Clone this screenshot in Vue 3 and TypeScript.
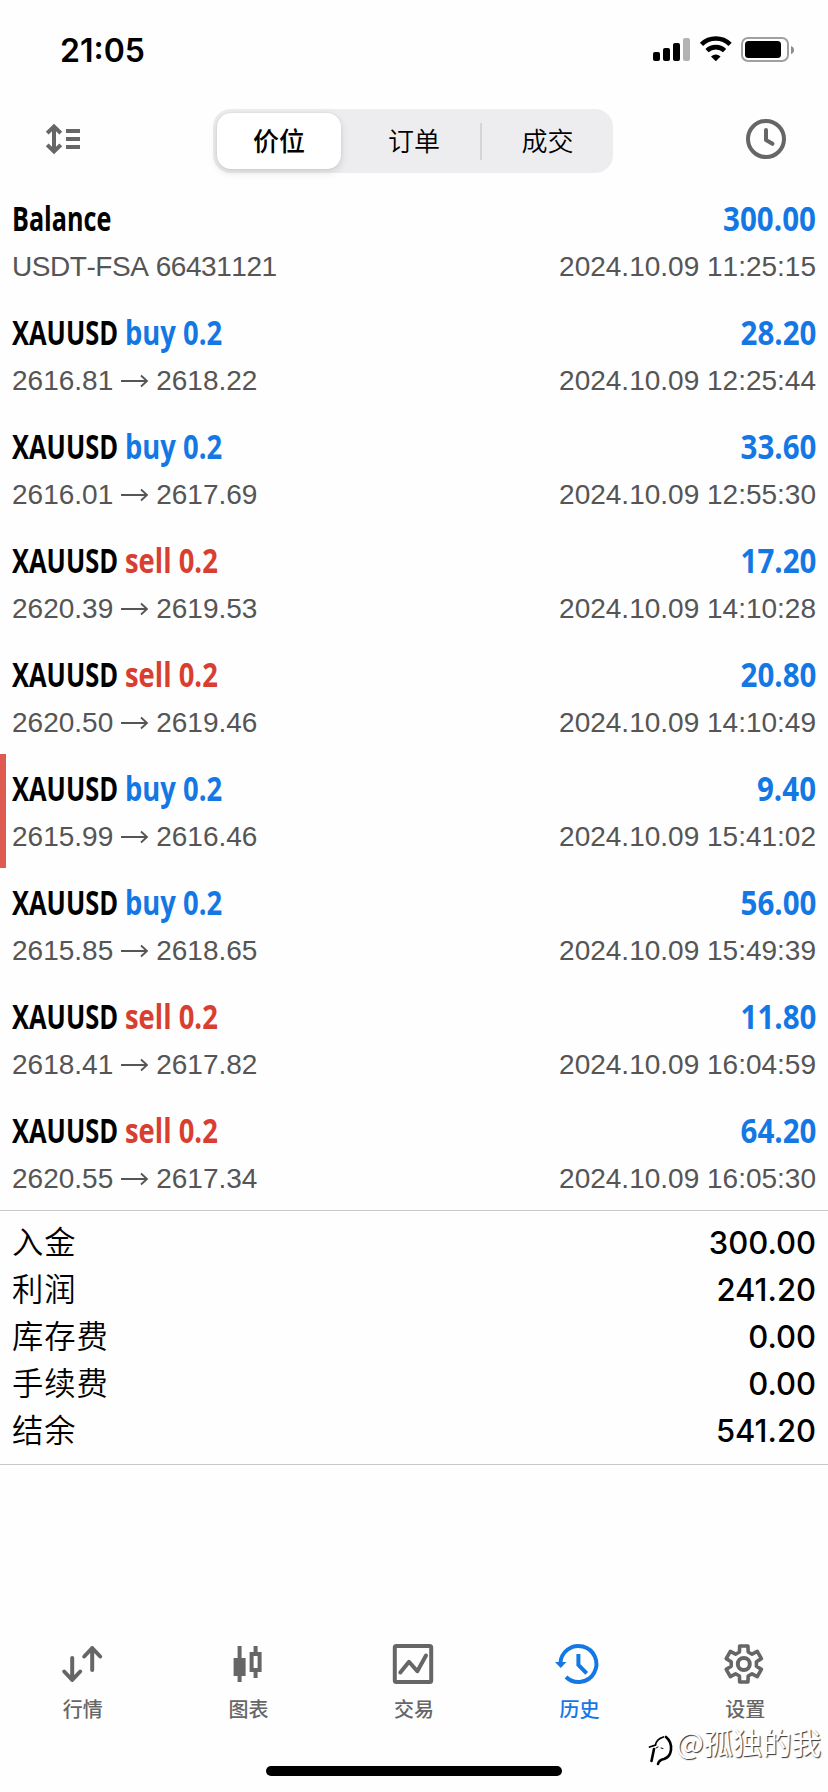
<script setup lang="ts">
interface Deal {
  symbol: string
  side?: 'buy' | 'sell'
  profit: string
  detail?: string
  from?: string
  to?: string
  time: string
  flagged?: boolean
}

const deals: Deal[] = [
  { symbol: 'Balance', profit: '300.00', detail: 'USDT-FSA 66431121', time: '2024.10.09 11:25:15' },
  { symbol: 'XAUUSD', side: 'buy', profit: '28.20', from: '2616.81', to: '2618.22', time: '2024.10.09 12:25:44' },
  { symbol: 'XAUUSD', side: 'buy', profit: '33.60', from: '2616.01', to: '2617.69', time: '2024.10.09 12:55:30' },
  { symbol: 'XAUUSD', side: 'sell', profit: '17.20', from: '2620.39', to: '2619.53', time: '2024.10.09 14:10:28' },
  { symbol: 'XAUUSD', side: 'sell', profit: '20.80', from: '2620.50', to: '2619.46', time: '2024.10.09 14:10:49' },
  { symbol: 'XAUUSD', side: 'buy', profit: '9.40', from: '2615.99', to: '2616.46', time: '2024.10.09 15:41:02', flagged: true },
  { symbol: 'XAUUSD', side: 'buy', profit: '56.00', from: '2615.85', to: '2618.65', time: '2024.10.09 15:49:39' },
  { symbol: 'XAUUSD', side: 'sell', profit: '11.80', from: '2618.41', to: '2617.82', time: '2024.10.09 16:04:59' },
  { symbol: 'XAUUSD', side: 'sell', profit: '64.20', from: '2620.55', to: '2617.34', time: '2024.10.09 16:05:30' },
]

const totals = [
  { label: '入金', value: '300.00' },
  { label: '利润', value: '241.20' },
  { label: '库存费', value: '0.00' },
  { label: '手续费', value: '0.00' },
  { label: '结余', value: '541.20' },
]

// Outline of the six-toothed settings gear
const gear = Array.from({ length: 6 }, (_, i) => {
  const corners: [number, number][] = [[-20, 12.8], [-13, 18.4], [13, 18.4], [20, 12.8]]
  return corners
    .map(([offset, r]) => {
      const a = ((i * 60 - 90 + offset) * Math.PI) / 180
      return `${(22.8 + r * Math.cos(a)).toFixed(2)},${(24 + r * Math.sin(a)).toFixed(2)}`
    })
    .join(' ')
}).join(' ')
</script>

<template>
  <div class="screen">
    <header class="status">
      <span class="clock">21:05</span>
      <svg class="indicators" width="144" height="28" viewBox="0 0 144 28">
        <rect x="3" y="16" width="7" height="9" rx="2" />
        <rect x="13" y="12" width="7" height="13" rx="2" />
        <rect x="23" y="7" width="7" height="18" rx="2" />
        <rect x="33" y="2" width="7" height="23" rx="2" fill="#b3b3b3" />
        <g fill="none" stroke="#000" stroke-width="4.6">
          <path d="M51.5 8.3a20.5 20.5 0 0 1 28.6 0" />
          <path d="M57 14.6a12.8 12.8 0 0 1 17.6 0" />
        </g>
        <path d="M61 20.4q4.7-3.8 9.6 0l-4.8 4.8z" />
        <rect x="92" y="2" width="46" height="23" rx="6" fill="none" stroke="#a0a0a0" stroke-width="2" />
        <rect x="95" y="5" width="36" height="17" rx="3.5" />
        <path d="M141 10q3 1 3 4t-3 4z" fill="#8c8c8c" />
      </svg>
    </header>

    <nav class="toolbar">
      <svg class="sort" width="40" height="40" viewBox="0 0 40 40" fill="none" stroke="#666" stroke-width="4">
        <path d="M14 7v26M7.2 14.2l6.8-6.7 6.8 6.7M7.2 25.8l6.8 6.7 6.8-6.7M26 12h14M26 20h14M26 28h14" />
      </svg>
      <div class="segments">
        <button class="segment active">价位</button>
        <button class="segment">订单</button>
        <i class="divider"></i>
        <button class="segment last">成交</button>
      </div>
      <svg class="history" width="40" height="40" viewBox="0 0 40 40" fill="none" stroke="#666" stroke-width="4">
        <circle cx="20" cy="20" r="18" />
        <path d="M20 11v10l6.5 3.8" stroke-linecap="round" stroke-linejoin="round" />
      </svg>
    </nav>

    <main>
      <section class="deals">
        <article v-for="deal in deals" :key="deal.time" class="deal" :class="{ flagged: deal.flagged }">
          <div class="line title">
            <div class="name">
              <span :class="deal.side ? 'symbol' : 'operation'">{{ deal.symbol }}</span>
              <span v-if="deal.side" class="side" :class="deal.side">{{ deal.side }} 0.2</span>
            </div>
            <span class="profit">{{ deal.profit }}</span>
          </div>
          <div class="line detail">
            <span v-if="deal.detail" class="account">{{ deal.detail }}</span>
            <span v-else class="prices">
              <span>{{ deal.from }}</span>
              <svg width="29" height="14" viewBox="0 0 29 14" fill="none" stroke="#555" stroke-width="1.8">
                <path d="M1 7h26M21 1.5l6 5.5-6 5.5" />
              </svg>
              <span>{{ deal.to }}</span>
            </span>
            <span>{{ deal.time }}</span>
          </div>
        </article>
      </section>

      <dl class="totals">
        <div v-for="row in totals" :key="row.label" class="total">
          <dt>{{ row.label }}</dt>
          <dd>{{ row.value }}</dd>
        </div>
      </dl>
    </main>

    <footer class="tabs">
      <a class="tab">
        <svg width="48" height="48" viewBox="0 0 48 48" fill="none" stroke="currentColor" stroke-width="4" stroke-linecap="round" stroke-linejoin="round">
          <path d="M13.2 18v22M5.2 31.5l8 8.5 8-8.5M33.2 30V8M25.2 16.5l8-8.5 8 8.5" />
        </svg>
        <span>行情</span>
      </a>
      <a class="tab">
        <svg width="48" height="48" viewBox="0 0 48 48" fill="currentColor">
          <path d="M13.6 6h4v12h4v18h-4v6h-4v-6h-4V18h4z" />
          <path fill-rule="evenodd" d="M29.6 6h4v6h4v20h-4v6h-4v-6h-4V12h4zM29.6 16v12h4V16z" />
        </svg>
        <span>图表</span>
      </a>
      <a class="tab">
        <svg width="48" height="48" viewBox="0 0 48 48" fill="none" stroke="currentColor" stroke-width="4" stroke-linejoin="round">
          <rect x="4.8" y="6" width="36.4" height="36" rx="1.5" />
          <path d="M10.3 32.5l8.7-10.7 8.3 9.4L36 15.5" stroke-linecap="round" />
        </svg>
        <span>交易</span>
      </a>
      <a class="tab current">
        <svg width="48" height="48" viewBox="0 0 48 48" fill="none" stroke="currentColor" stroke-width="4">
          <path d="M4.4 24a18 18 0 1 1 5.6 13M22.4 14v11l8.3 8.3" />
          <path d="M-1 22h11.4l-5.7 6z" fill="currentColor" stroke="none" />
        </svg>
        <span>历史</span>
      </a>
      <a class="tab">
        <svg width="48" height="48" viewBox="0 0 48 48" fill="none" stroke="currentColor" stroke-width="4" stroke-linejoin="round">
          <polygon :points="gear" stroke-width="3.6" />
          <circle cx="22.8" cy="24" r="6" />
        </svg>
        <span>设置</span>
      </a>
    </footer>

    <div class="watermark">
      <svg width="28" height="36" viewBox="0 0 28 36" fill="none" stroke="#000" stroke-linecap="round">
        <path d="M6 15L3.5 27" stroke-width="2.6" />
        <path d="M1.5 13l6-2q1-6 8-8" stroke-width="1.8" />
        <path d="M18 3q6 5 5 13-1 7-7 9-5 1-6 5" stroke-width="2.6" />
        <path d="M8 14l2-1M13 14l2 .5" stroke-width="1" />
      </svg>
      <span>@孤独的我</span>
    </div>
    <div class="home-indicator"></div>
  </div>
</template>

<style>
body {
  margin: 0;
  background: #fefefe;
}
</style>

<style scoped>
.screen {
  position: relative;
  display: flex;
  flex-direction: column;
  width: 828px;
  height: 1792px;
  overflow: hidden;
  background: #fefefe;
  color: #000;
  font-family: Inter, "Noto Sans CJK SC", sans-serif;
}

.status {
  display: flex;
  justify-content: space-between;
  align-items: center;
  box-sizing: border-box;
  height: 100px;
  padding: 0 34px 0 60px;
}

.clock {
  padding-top: 1px;
  font-size: 32px;
  font-weight: 600;
  line-height: 40px;
}

.toolbar {
  display: flex;
  justify-content: space-between;
  align-items: center;
  box-sizing: border-box;
  height: 84px;
  padding: 0 42px 6px 40px;
}

.segments {
  display: flex;
  align-items: center;
  box-sizing: border-box;
  width: 400px;
  height: 64px;
  padding: 4px;
  border-radius: 18px;
  background: #ededef;
  margin-top: 4px;
}

.segment {
  flex: none;
  width: 134px;
  height: 56px;
  padding: 0 0 4px 2px;
  border: 0;
  border-radius: 14px;
  background: none;
  color: #000;
  font: 350 26px "Noto Sans CJK SC", sans-serif;
}

.segment.active {
  width: 124px;
  margin-right: 5px;
  padding-left: 0;
  background: #fff;
  font-weight: 500;
  box-shadow: 0 3px 8px rgb(0 0 0 / 13%), 0 0 2px rgb(0 0 0 / 10%);
}

.segment.last {
  flex: 1;
  padding-left: 4px;
}

.divider {
  width: 2px;
  height: 37px;
  background: #d5d5d8;
}

.deal {
  box-sizing: border-box;
  height: 114px;
  padding: 10px 12px 0;
}

.deal.flagged {
  padding-left: 6px;
  border-left: 6px solid #dd5b50;
}

.line {
  display: flex;
  justify-content: space-between;
  white-space: nowrap;
}

.title {
  height: 50px;
  font: 700 34px/48px "Open Sans", sans-serif;
}

.name {
  display: flex;
}

.symbol,
.operation,
.side {
  transform-origin: 0 50%;
}

.symbol {
  width: 113px;
  transform: scaleX(0.75);
}

.operation {
  transform: scaleX(0.74);
}

.side {
  transform: scaleX(0.806);
}

.buy,
.profit {
  color: #1478e4;
}

.sell {
  color: #d93f31;
}

.profit {
  transform: scaleX(0.868);
  transform-origin: 100% 50%;
}

.detail {
  height: 46px;
  color: #555;
  font: 400 28px/46px "Liberation Sans", Arial, sans-serif;
  font-kerning: none;
}

.account {
  letter-spacing: -0.45px;
}

.prices {
  display: flex;
  align-items: center;
  gap: 7px;
}

.totals {
  margin: 0;
  padding: 8px 12px 10px;
  border-top: 1px solid #c8c8ca;
  border-bottom: 1px solid #c8c8ca;
}

.total {
  display: flex;
  justify-content: space-between;
  align-items: center;
  height: 47px;
}

.total dt {
  padding-bottom: 4px;
  font: 350 31.3px/43px "Noto Sans CJK SC", sans-serif;
  letter-spacing: 1px;
}

.total dd {
  margin: 0;
  font-size: 31px;
  font-weight: 500;
}

.tabs {
  display: grid;
  grid-template-columns: repeat(5, 1fr);
  margin-top: auto;
  height: 152px;
  color: #666;
}

.tab {
  display: flex;
  flex-direction: column;
  align-items: center;
  font: 500 20px/30px "Noto Sans CJK SC", sans-serif;
}

.tab svg {
  overflow: visible;
}

.tab span {
  margin-top: 6px;
}

.tab.current {
  color: #1478e4;
}

.watermark {
  position: absolute;
  right: 7px;
  bottom: 32px;
  display: flex;
  align-items: center;
  color: #fff;
  font: 400 29.3px/38px "Noto Sans CJK SC", sans-serif;
  text-shadow: 1px 1px 1px #333;
}

.watermark svg {
  margin-top: 10px;
  margin-bottom: -10px;
}

.watermark span {
  margin-top: -2px;
}

.home-indicator {
  position: absolute;
  left: 266px;
  bottom: 16px;
  width: 296px;
  height: 10px;
  border-radius: 5px;
  background: #000;
}
</style>
